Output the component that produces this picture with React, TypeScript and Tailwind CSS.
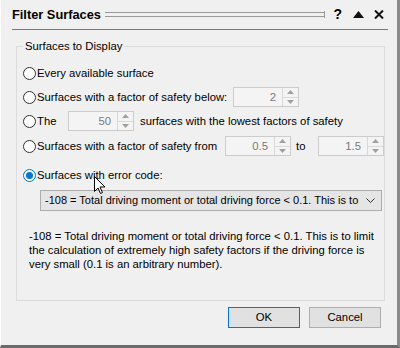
import React from "react";

function Radio({ checked = false }: { checked?: boolean }) {
  return (
    <span
      className={
        "ml-[6px] flex h-[13px] w-[13px] shrink-0 items-center justify-center rounded-full border bg-white " +
        (checked ? "border-[#0078d7]" : "border-[#333333]")
      }
    >
      {checked && <span className="h-[7px] w-[7px] rounded-full bg-[#0078d7]" />}
    </span>
  );
}

function Spin({ value }: { value: string }) {
  return (
    <div className="flex h-[20px] w-[66px] shrink-0 border border-[#cccccc] bg-[#f4f4f4]">
      <div className="flex flex-1 items-center justify-end pr-[6px] text-[#7a7a7a]">{value}</div>
      <div className="flex w-[16px] flex-col border-l border-[#d9d9d9]">
        <div className="flex flex-1 items-center justify-center border-b border-[#d9d9d9]">
          <svg width="7" height="4" viewBox="0 0 7 4">
            <path d="M0 4 L3.5 0 L7 4 Z" fill="#a0a0a0" />
          </svg>
        </div>
        <div className="flex flex-1 items-center justify-center">
          <svg width="7" height="4" viewBox="0 0 7 4">
            <path d="M0 0 L3.5 4 L7 0 Z" fill="#a0a0a0" />
          </svg>
        </div>
      </div>
    </div>
  );
}

export default function App() {
  return (
    <div className="relative flex h-[348px] w-[400px] flex-col border-b-[3px] border-l border-r-[3px] border-b-[#6a6a6a] border-l-white border-r-[#8a8a8a] bg-[#f0f0f0] font-['Liberation_Sans',Arial,sans-serif] text-[11.3px] text-black">
      {/* title bar */}
      <div className="ml-[11px] mr-[9px] flex h-[30px] shrink-0 items-center border-b border-[#7a7a7a]">
        <span className="shrink-0 whitespace-nowrap text-[12.8px] font-bold">Filter Surfaces</span>
        <div className="ml-[4px] flex h-[7px] flex-1 items-center">
          <div className="h-[5px] flex-1 border-y border-[#9a9a9a]" />
          <div className="h-[7px] w-px bg-[#9a9a9a]" />
        </div>
        <span className="ml-[8px] shrink-0 text-[14px] font-bold">?</span>
        <svg className="ml-[11px] shrink-0" width="11" height="7" viewBox="0 0 11 7">
          <path d="M0 7 L5.5 0 L11 7 Z" fill="#111" />
        </svg>
        <svg className="ml-[10px] mr-[4px] shrink-0" width="10" height="9" viewBox="0 0 10 9">
          <path d="M1 0.5 L9 8.5 M9 0.5 L1 8.5" stroke="#111" strokeWidth="2" />
        </svg>
      </div>

      {/* group box */}
      <fieldset className="ml-[15px] mt-[10px] h-[261px] w-[366px] shrink-0 border border-[#dcdcdc]">
        <legend className="ml-[6px] px-[2px] leading-[13px]">Surfaces to Display</legend>
        <div className="flex flex-col pt-[10px]">
          <div className="flex h-[20px] items-center">
            <Radio />
            <span className="ml-[1px]">Every available surface</span>
          </div>
          <div className="mt-[4px] flex h-[20px] items-center">
            <Radio />
            <span className="ml-[1px] w-[196px]">Surfaces with a factor of safety below:</span>
            <Spin value="2" />
          </div>
          <div className="mt-[4px] flex h-[20px] items-center">
            <Radio />
            <span className="ml-[1px] w-[31px]">The</span>
            <Spin value="50" />
            <span className="ml-[6px]">surfaces with the lowest factors of safety</span>
          </div>
          <div className="mt-[5px] flex h-[20px] items-center">
            <Radio />
            <span className="ml-[1px] w-[188px]">Surfaces with a factor of safety from</span>
            <Spin value="0.5" />
            <span className="ml-[5px] w-[22px]">to</span>
            <Spin value="1.5" />
          </div>
          <div className="mt-[9px] flex h-[20px] items-center">
            <Radio checked />
            <span className="ml-[1px]">Surfaces with error code:</span>
          </div>
          <div className="ml-[23px] mt-[5px] flex h-[21px] w-[342px] items-center border border-[#adadad] bg-[#e5e5e5] pl-[4px] pr-[6px]">
            <span className="flex-1 overflow-hidden whitespace-nowrap text-[11px]">
              -108 = Total driving moment or total driving force &lt; 0.1. This is to
            </span>
            <svg className="ml-[4px] shrink-0" width="9" height="5" viewBox="0 0 9 5">
              <path d="M0.5 0.5 L4.5 4.5 L8.5 0.5" stroke="#333" fill="none" />
            </svg>
          </div>
          <p className="ml-[12px] mt-[18px] whitespace-nowrap leading-[14px]">
            -108 = Total driving moment or total driving force &lt; 0.1. This is to limit
            <br />
            the calculation of extremely high safety factors if the driving force is
            <br />
            very small (0.1 is an arbitrary number).
          </p>
        </div>
      </fieldset>

      {/* buttons */}
      <div className="ml-[227px] mt-[6px] flex gap-[9px]">
        <button className="h-[21px] w-[72px] border border-[#0078d7] bg-[#e1e1e1]">OK</button>
        <button className="h-[21px] w-[72px] border border-[#adadad] bg-[#e1e1e1]">Cancel</button>
      </div>

      {/* mouse cursor */}
      <svg className="absolute left-[93px] top-[176px]" width="12" height="19" viewBox="0 0 12 19">
        <path
          d="M0.5 0.5 L0.5 15.5 L4 12 L6.5 17.5 L8.5 16.5 L6 11 L11 11 Z"
          fill="#fff"
          stroke="#000"
          strokeLinejoin="round"
        />
      </svg>
    </div>
  );
}
